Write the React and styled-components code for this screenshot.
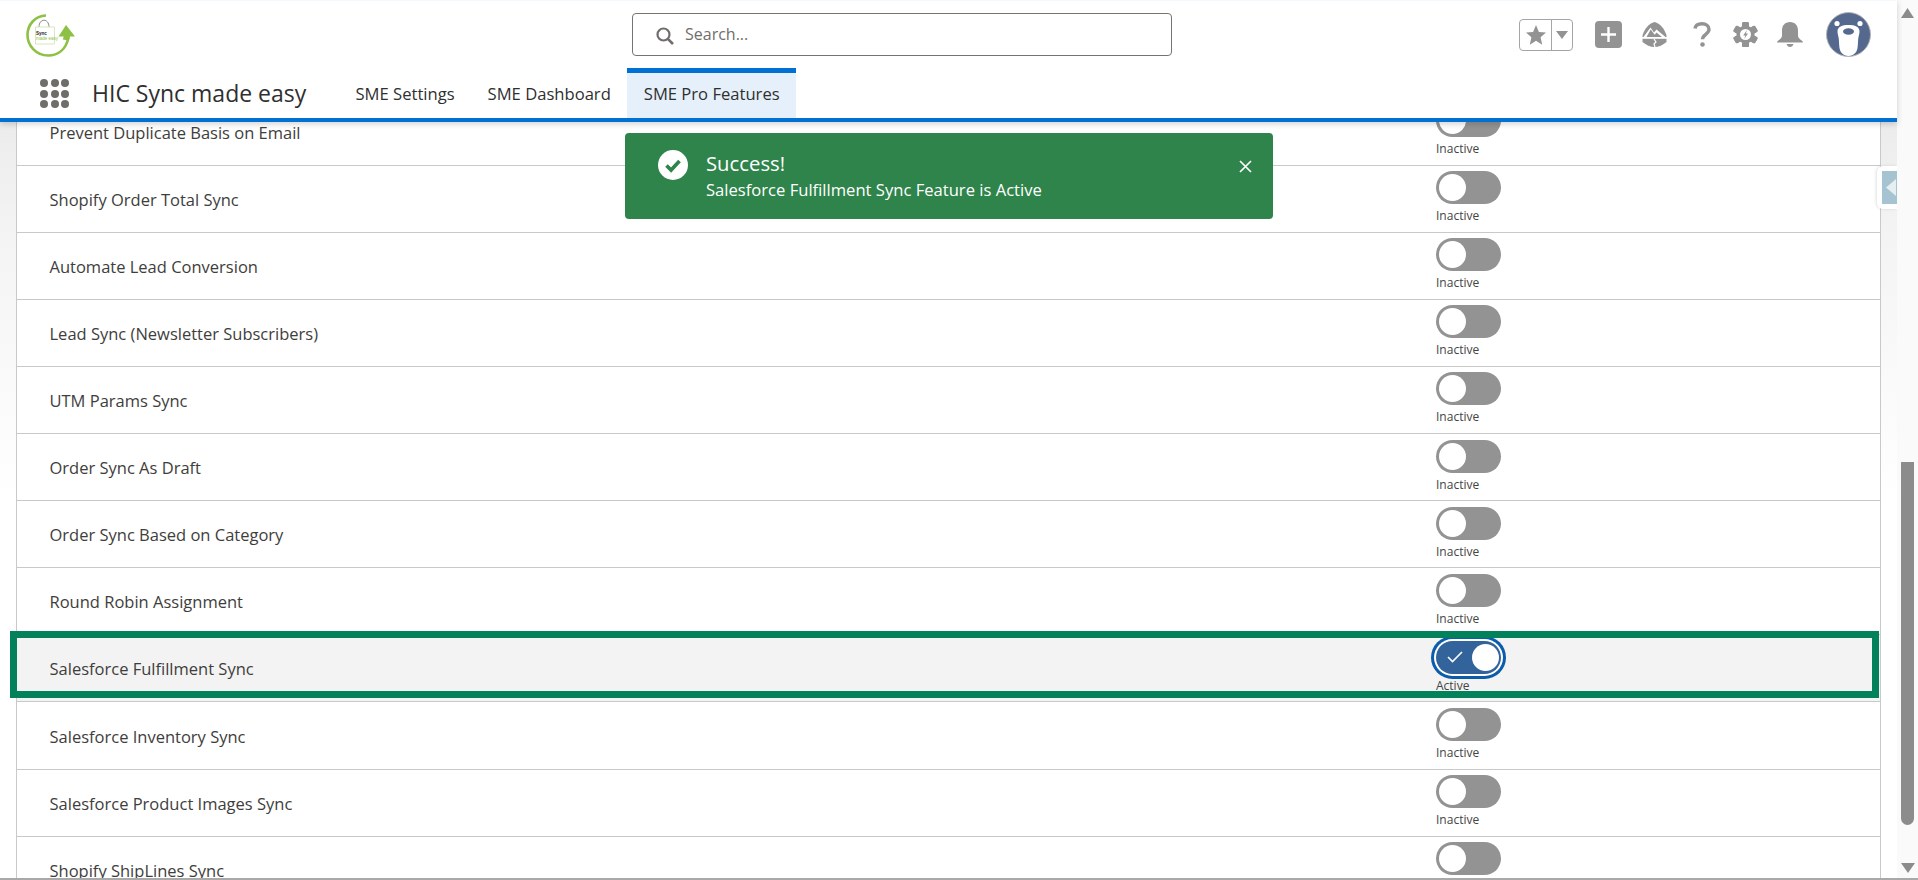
import React from 'react';
import styled, { createGlobalStyle } from 'styled-components';

const features = [
  { name: 'Prevent Duplicate Basis on Email' },
  { name: 'Shopify Order Total Sync' },
  { name: 'Automate Lead Conversion' },
  { name: 'Lead Sync (Newsletter Subscribers)' },
  { name: 'UTM Params Sync' },
  { name: 'Order Sync As Draft' },
  { name: 'Order Sync Based on Category' },
  { name: 'Round Robin Assignment' },
  { name: 'Salesforce Fulfillment Sync', active: true },
  { name: 'Salesforce Inventory Sync' },
  { name: 'Salesforce Product Images Sync' },
  { name: 'Shopify ShipLines Sync' },
];

const tabs = ['SME Settings', 'SME Dashboard', 'SME Pro Features'];

function App() {
  return (
    <>
      <GlobalStyle />
      <Screen>
        <Main>
          <Page>
            <Header>
              <TopBar>
                <Logo />
                <SearchBox>
                  <SearchIcon />
                  <SearchText>Search...</SearchText>
                </SearchBox>
                <Actions>
                  <FavoriteBox>
                    <FavoriteStar>
                      <svg width="20" height="20" viewBox="0 0 20 20">
                        <path fill="#939393" d="M10 0l2.9 6.9 7.1.6-5.4 4.8 1.6 7.4L10 15.8l-6.2 3.9 1.6-7.4L0 7.5l7.1-.6z" />
                      </svg>
                    </FavoriteStar>
                    <FavoriteCaret>
                      <svg width="12" height="8" viewBox="0 0 12 8">
                        <path fill="#939393" d="M0 0h12L6 8z" />
                      </svg>
                    </FavoriteCaret>
                  </FavoriteBox>
                  <PlusButton>
                    <svg width="27" height="27" viewBox="0 0 27 27">
                      <rect width="27" height="27" rx="4" fill="#939393" />
                      <path stroke="#fff" strokeWidth="2.4" d="M13.5 6v15M6 13.5h15" />
                    </svg>
                  </PlusButton>
                  <TrailheadIcon />
                  <HelpIcon />
                  <GearIcon />
                  <BellIcon />
                  <Avatar />
                </Actions>
              </TopBar>
              <NavBar>
                <AppGrid>
                  {Array.from({ length: 9 }).map((_, i) => <AppDot key={i} />)}
                </AppGrid>
                <AppTitle>HIC Sync made easy</AppTitle>
                <Tabs>
                  {tabs.map((tab, i) => (
                    <Tab key={tab} $selected={i === 2}>{tab}</Tab>
                  ))}
                </Tabs>
              </NavBar>
            </Header>

            <Body>
              <Card>
                {features.map(item => (
                  <Row key={item.name} $active={item.active}>
                    <RowName>{item.name}</RowName>
                    <ToggleCell>
                      <Toggle $on={item.active}>
                        {item.active && (
                          <svg width="16" height="12" viewBox="0 0 16 12">
                            <path fill="none" stroke="#fff" strokeWidth="1.6" d="M1 6l4.5 4.5L15 1" />
                          </svg>
                        )}
                        <Knob />
                      </Toggle>
                      <ToggleLabel>{item.active ? 'Active' : 'Inactive'}</ToggleLabel>
                    </ToggleCell>
                    {item.active && <Highlight />}
                  </Row>
                ))}
              </Card>

              <Toast>
                <svg width="30" height="30" viewBox="0 0 30 30">
                  <circle cx="15" cy="15" r="15" fill="#fff" />
                  <path fill="none" stroke="#2e844a" strokeWidth="3.6" d="M8.5 15.5l4.6 4.6 8.4-9" />
                </svg>
                <ToastText>
                  <ToastTitle>Success!</ToastTitle>
                  <ToastMessage>Salesforce Fulfillment Sync Feature is Active</ToastMessage>
                </ToastText>
                <ToastClose>
                  <svg width="13" height="13" viewBox="0 0 13 13">
                    <path stroke="#fff" strokeWidth="1.7" d="M1 1l11 11M12 1L1 12" />
                  </svg>
                </ToastClose>
              </Toast>

              <SideTab>
                <SideTabInner>
                  <svg width="10" height="17" viewBox="0 0 10 17">
                    <path fill="#e6eef1" d="M10 0v17L0 8.5z" />
                  </svg>
                </SideTabInner>
              </SideTab>
            </Body>
          </Page>

          <Scrollbar>
            <svg width="13" height="10" viewBox="0 0 13 10">
              <path fill="#8c8c8c" d="M6.5 0L13 10H0z" />
            </svg>
            <ScrollThumb />
            <svg width="14" height="10" viewBox="0 0 14 10">
              <path fill="#8c8c8c" d="M0 0h14L7 10z" />
            </svg>
          </Scrollbar>
        </Main>
        <BottomEdge />
      </Screen>
    </>
  );
}

function Logo() {
  return (
    <LogoWrap>
      <svg width="49" height="43" viewBox="0 0 49 43">
        <path fill="none" stroke="#8dc044" strokeWidth="2.6" d="M20 1.500C9 2 1.500 10.500 1.500 21c0 11 9 20.500 20.500 20.500 10.500 0 18-6.500 20.500-18" />
        <path fill="#8dc044" d="M40 11l9 11.500h-5c-.3 1.500-.6 2.500-1.200 4l-6-1c.4-1 .7-2 .9-3h-5.200z" />
        <path fill="none" stroke="#8a8a8a" strokeWidth="1" d="M13 13c0-9 10-9 10 0" />
        <path fill="none" stroke="#d7e7bf" strokeWidth="1" d="M9.500 13h19v17h-19z" />
        <LogoText x="10" y="21" fill="#222" fontWeight="700">Sync</LogoText>
        <LogoText x="10" y="26" fill="#8dc044">made easy</LogoText>
      </svg>
    </LogoWrap>
  );
}

function SearchIcon() {
  return (
    <SearchGlyph>
      <svg width="18" height="18" viewBox="0 0 18 18">
        <circle cx="7.500" cy="7.500" r="6" fill="none" stroke="#706e6b" strokeWidth="2.200" />
        <path stroke="#706e6b" strokeWidth="2.600" d="M11.800 11.800L17 17" />
      </svg>
    </SearchGlyph>
  );
}

function TrailheadIcon() {
  return (
    <IconSlot $w={25} $ml={20}>
      <svg width="25" height="25" viewBox="0 0 25 25">
        <path fill="#939393" d="M12.500 0c5.500 1.500 10 6.500 12 13.500v6.500c-3.500 3-8 5-12 5s-8.500-2-12-5v-6.500C2.500 6.500 7 1.500 12.500 0z" />
        <path fill="#fff" d="M1.500 15l7-9.500 3.500 5 2.500-3L23.500 15h-3.500l-5.500-4.500-1.800 2.300-4-5.300L4.500 15z" />
        <path fill="#fff" d="M0 15h25v1.800H0z" />
        <path fill="none" stroke="#fff" strokeWidth="1.200" d="M12 17l2 3-2 2 1 3" />
      </svg>
    </IconSlot>
  );
}

function HelpIcon() {
  return (
    <IconSlot $w={18} $ml={26}>
      <svg width="18" height="25" viewBox="0 0 18 25">
        <path fill="none" stroke="#939393" strokeWidth="3.400" d="M2 6.500C2.500 3.500 5.500 1.800 9 1.800c4 0 7 2.200 7 5.500 0 5-6.500 5-6.500 10" />
        <circle cx="9.500" cy="22.500" r="2.300" fill="#939393" />
      </svg>
    </IconSlot>
  );
}

function GearIcon() {
  return (
    <IconSlot $w={25} $ml={22}>
      <svg width="25" height="25" viewBox="0 0 25 25">
        {[0, 60, 120, 180, 240, 300].map(deg => (
          <rect key={deg} x="9" y="0" width="7" height="25" rx="1.500" fill="#939393" transform={`rotate(${deg} 12.500 12.500)`} />
        ))}
        <circle cx="12.500" cy="12.500" r="9" fill="#939393" />
        <circle cx="12.500" cy="12.500" r="5.500" fill="#fff" />
        <path fill="#939393" d="M14 8l-3.800 5.500h2.200l-1.200 3.500 3.800-5.500h-2.200z" />
      </svg>
    </IconSlot>
  );
}

function BellIcon() {
  return (
    <IconSlot $w={26} $ml={19}>
      <svg width="26" height="25" viewBox="0 0 26 25">
        <path fill="#939393" d="M13 0c5 0 8 3.500 8 8.500v5c0 2 1.500 3.500 4 5.200.8.500 1 1.300 1 1.800H0c0-.5.200-1.300 1-1.800 2.500-1.700 4-3.200 4-5.200v-5C5 3.500 8 0 13 0z" />
        <path fill="#939393" d="M9.500 22h7c-.5 1.800-2 3-3.500 3s-3-1.200-3.500-3z" />
      </svg>
    </IconSlot>
  );
}

function Avatar() {
  return (
    <IconSlot $w={45} $ml={23}>
      <svg width="45" height="45" viewBox="0 0 45 45">
        <circle cx="22.500" cy="22.500" r="22" fill="#54698d" stroke="#b5b5b5" strokeWidth="1" />
        <circle cx="11" cy="11.500" r="2.600" fill="#fff" />
        <circle cx="34" cy="11.500" r="2.600" fill="#fff" />
        <path fill="#fff" d="M22.500 13c6.500 0 11 1.500 11 6.500 0 3-1 4.500-1.300 7.500-.3 4-.3 7-.8 9.500-.6 3.500-3.500 7.500-8.900 7.500s-8.300-4-8.900-7.500c-.5-2.500-.5-5.500-.8-9.500-.3-3-1.300-4.500-1.300-7.500 0-5 4.500-6.500 11-6.500z" />
        <ellipse cx="22.500" cy="19.500" rx="5.500" ry="3.200" fill="#54698d" />
      </svg>
    </IconSlot>
  );
}

const GlobalStyle = createGlobalStyle`
  html, body {
    margin: 0;
    padding: 0;
    background: #fff;
    overflow: hidden;
  }
  body {
    font-family: "Open Sans", "Noto Sans", sans-serif;
    color: #3e3e3c;
  }
`;

const Screen = styled.div`
  width: 1918px;
  height: 880px;
  display: flex;
  flex-direction: column;
  overflow: hidden;
`;

const Main = styled.div`
  flex: 1;
  min-height: 0;
  display: flex;
`;

const BottomEdge = styled.div`
  height: 2px;
  background: #a9a9a9;
`;

const Page = styled.div`
  flex: 1;
  min-width: 0;
  display: flex;
  flex-direction: column;
`;

const Header = styled.header`
  position: relative;
  z-index: 3;
  height: 122px;
  box-sizing: border-box;
  background: #fff;
  border-top: 1px solid #f3f9fd;
  border-bottom: 4px solid #0070d2;
  box-shadow: 0 2px 6px rgba(0, 0, 0, 0.18);
`;

const TopBar = styled.div`
  height: 67px;
  display: flex;
  align-items: center;
`;

const LogoWrap = styled.div`
  margin-left: 26px;
  width: 49px;
  height: 43px;
  margin-top: 2px;
  flex: none;
`;

const LogoText = styled.text`
  font-family: "Liberation Sans", sans-serif;
  font-size: 4.500px;
`;

const SearchBox = styled.div`
  margin-left: 557px;
  margin-top: -1px;
  width: 540px;
  height: 43px;
  box-sizing: border-box;
  flex: none;
  display: flex;
  align-items: center;
  padding-left: 23px;
  border: 1px solid #747474;
  border-radius: 4px;
  background: #fff;
`;

const SearchGlyph = styled.span`
  display: flex;
  margin-top: 3px;
`;

const SearchText = styled.span`
  margin-left: 11px;
  font-size: 16px;
  color: #706e6b;
`;

const Actions = styled.div`
  margin-left: 347px;
  display: flex;
  align-items: center;
`;

const FavoriteBox = styled.div`
  width: 54px;
  height: 32px;
  box-sizing: border-box;
  display: flex;
  border: 1px solid #a5a5a5;
  border-radius: 4px;
`;

const FavoriteStar = styled.span`
  width: 31px;
  display: flex;
  align-items: center;
  justify-content: center;
  border-right: 1px solid #a5a5a5;
`;

const FavoriteCaret = styled.span`
  flex: 1;
  display: flex;
  align-items: center;
  justify-content: center;
`;

const PlusButton = styled.span`
  display: flex;
  margin-left: 22px;
`;

const IconSlot = styled.span`
  display: flex;
  flex: none;
  width: ${props => props.$w}px;
  margin-left: ${props => props.$ml}px;
`;

const NavBar = styled.nav`
  height: 50px;
  display: flex;
  align-items: stretch;
`;

const AppGrid = styled.div`
  margin: 11px 0 0 40px;
  width: 28px;
  height: 29px;
  display: grid;
  grid-template-columns: repeat(3, 8px);
  grid-template-rows: repeat(3, 8px);
  gap: 2.500px;
  flex: none;
`;

const AppDot = styled.span`
  border-radius: 50%;
  background: #706e6b;
`;

const AppTitle = styled.div`
  margin-left: 24px;
  width: 247px;
  flex: none;
  font-size: 23px;
  line-height: 50px;
  color: #2f2f2f;
  white-space: nowrap;
`;

const Tabs = styled.div`
  display: flex;
`;

const Tab = styled.div`
  padding: 0 16.500px 4px;
  box-sizing: border-box;
  display: flex;
  align-items: center;
  font-size: 16.600px;
  color: #2f2f2f;
  white-space: nowrap;
  border-top: 5px solid ${props => (props.$selected ? '#0070d2' : 'transparent')};
  background: ${props => (props.$selected ? '#e6f0fa' : 'transparent')};
`;

const Body = styled.main`
  position: relative;
  flex: 1;
  min-height: 0;
  overflow: hidden;
  padding: 0 16px;
  background: linear-gradient(#ececec 0, #f4f4f4 120px, #fff 380px);
`;

const Card = styled.div`
  margin-top: -23.400px;
  background: #fff;
  border-left: 1px solid #c9c9c9;
  border-right: 1px solid #c9c9c9;
`;

const Row = styled.div`
  position: relative;
  height: 67.100px;
  box-sizing: border-box;
  padding-left: 32.500px;
  display: grid;
  grid-template-columns: 1386.500px 1fr;
  align-items: center;
  background: ${props => (props.$active ? '#f3f3f3' : '#fff')};
  border-bottom: 1px solid #c9c9c9;
`;

const RowName = styled.div`
  padding-top: 1px;
  font-size: 16.500px;
  color: #3e3e3c;
  white-space: nowrap;
`;

const ToggleCell = styled.div`
  align-self: start;
  padding-top: 5.500px;
`;

const Toggle = styled.div`
  width: 65px;
  height: 33px;
  box-sizing: border-box;
  display: flex;
  align-items: center;
  justify-content: ${props => (props.$on ? 'space-between' : 'flex-start')};
  padding: ${props => (props.$on ? '0 2px 0 11px' : '0 3px')};
  border-radius: 17px;
  background: ${props => (props.$on ? '#32639b' : '#939393')};
  box-shadow: ${props => (props.$on ? '0 0 0 2px #fff, 0 0 0 5px #0b5cab' : 'none')};
`;

const Knob = styled.span`
  width: 27px;
  height: 27px;
  border-radius: 50%;
  background: #fff;
`;

const ToggleLabel = styled.div`
  margin-top: 4px;
  font-size: 12px;
  line-height: 16px;
  color: #444;
`;

const Highlight = styled.div`
  position: absolute;
  z-index: 1;
  left: -7px;
  right: 1px;
  top: -4px;
  bottom: 3px;
  border: 7px solid #03815a;
  pointer-events: none;
`;

const Toast = styled.div`
  position: absolute;
  z-index: 2;
  top: 11px;
  left: 625px;
  width: 648px;
  height: 86px;
  box-sizing: border-box;
  padding: 16px 21px 0 33px;
  display: flex;
  align-items: flex-start;
  border-radius: 4px;
  background: #2e844a;
  color: #fff;

  > svg {
    margin-top: 1px;
  }
`;

const ToastText = styled.div`
  margin-left: 18px;
  flex: 1;
`;

const ToastTitle = styled.div`
  font-size: 20.300px;
  line-height: 29px;
`;

const ToastMessage = styled.div`
  font-size: 16.600px;
  line-height: 24px;
`;

const ToastClose = styled.span`
  display: flex;
  margin-top: 11px;
`;

const SideTab = styled.div`
  position: absolute;
  top: 44px;
  right: 0;
  width: 20px;
  height: 43px;
  box-sizing: border-box;
  padding: 5px 0 5px 5px;
  background: #fff;
  border-radius: 6px 0 0 6px;
  box-shadow: -1px 0 3px rgba(0, 0, 0, 0.12);
`;

const SideTabInner = styled.div`
  height: 100%;
  display: flex;
  align-items: center;
  justify-content: flex-end;
  padding-right: 1px;
  background: #a5c3d0;
`;

const Scrollbar = styled.aside`
  width: 21px;
  flex: none;
  box-sizing: border-box;
  padding: 8px 0 5px;
  display: flex;
  flex-direction: column;
  align-items: center;
  background: #fafafa;
`;

const ScrollThumb = styled.div`
  width: 13px;
  height: 363px;
  margin-top: 444px;
  margin-bottom: auto;
  border-radius: 0 0 7px 7px;
  background: #8c8c8c;
`;

export default App;
